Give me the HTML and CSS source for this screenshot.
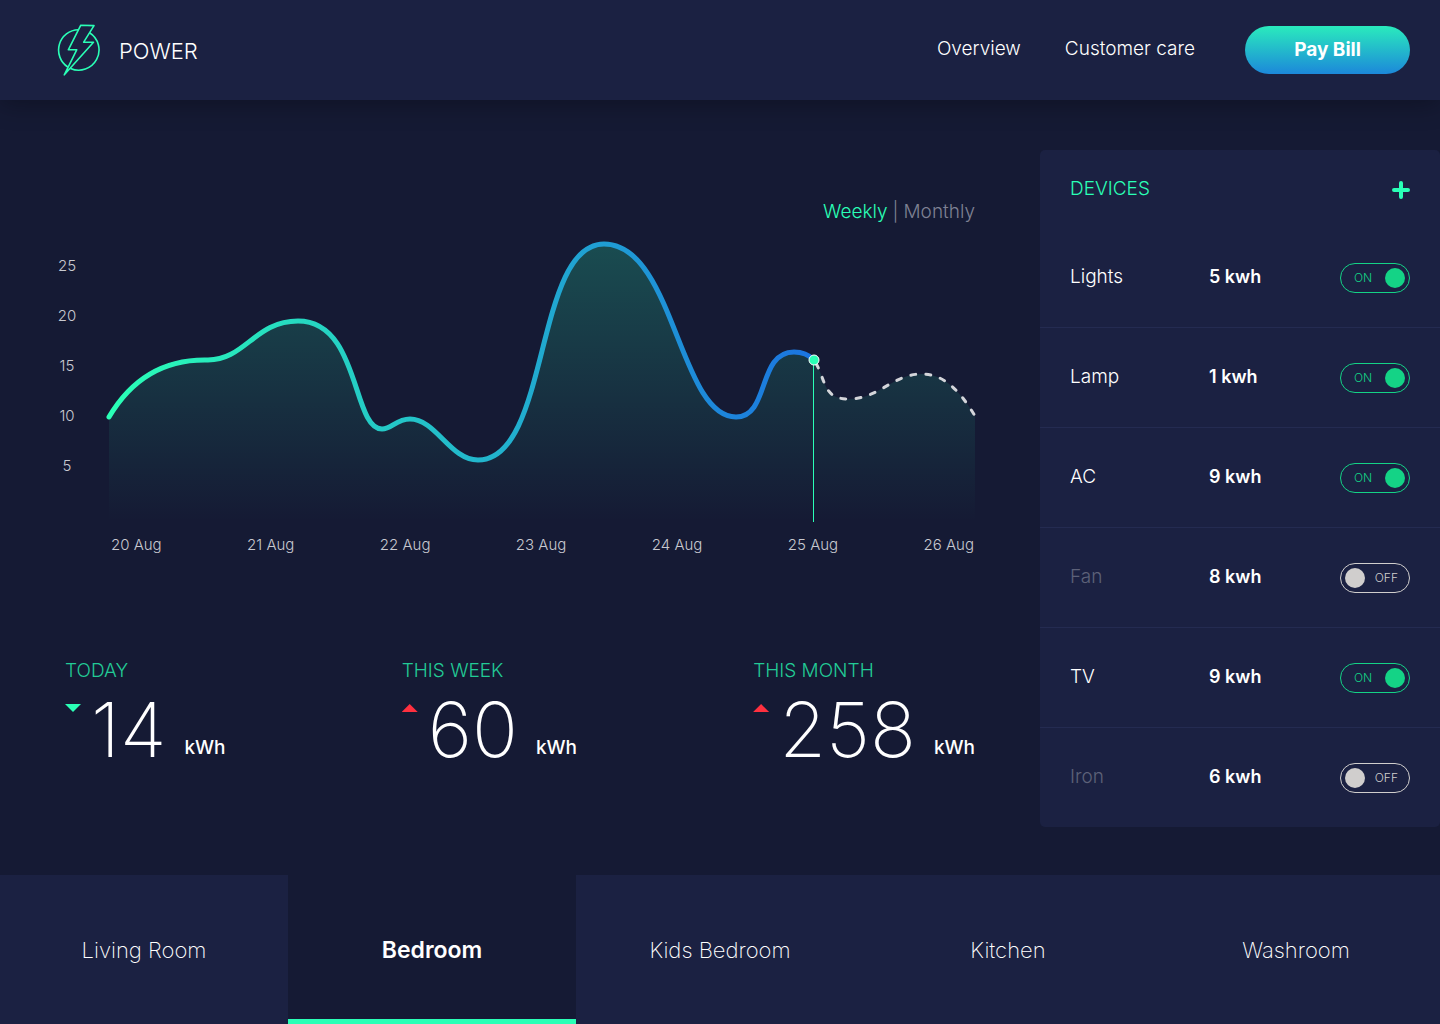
FILE: index.html
```html
<!DOCTYPE html>
<html lang="en">
<head>
<meta charset="utf-8">
<meta name="viewport" content="width=device-width, initial-scale=1">
<title>Power</title>
<link rel="stylesheet" href="styles.css">
</head>
<body>
<header class="topbar">
  <a class="brand" href="#">
    <svg class="brand-icon" width="44" height="54" viewBox="57 23 44 54" fill="none" stroke="#2affb6" stroke-width="1.6" stroke-linejoin="round" aria-hidden="true">
      <path d="M78.400 29.700A20.300 20.300 0 0 0 67.800 67M70.500 68.400A20.300 20.300 0 0 0 89.600 32.700"/>
      <path d="M80.800 25.200L94 25.600L83.700 42.200H93.500L64.300 74.800L76.700 49.800H68.300Z"/>
    </svg>
    <span>POWER</span>
  </a>
  <nav class="topnav">
    <a href="#">Overview</a>
    <a href="#">Customer care</a>
  </nav>
  <button class="pay" type="button">Pay Bill</button>
</header>

<main class="content">
  <section class="usage">
    <div class="range">
      <button class="range-option is-active" type="button">Weekly</button>
      <span>|</span>
      <button class="range-option" type="button">Monthly</button>
    </div>
    <div class="chart">
      <div class="y-axis"><span>25</span><span>20</span><span>15</span><span>10</span><span>5</span></div>
      <svg class="plot" viewBox="104 236 876 288" role="img" aria-label="Energy use from 20 to 26 August">
        <defs>
          <linearGradient id="line" gradientUnits="userSpaceOnUse" x1="109" y1="0" x2="814" y2="0">
            <stop offset="0" stop-color="#2affb6"/><stop offset="1" stop-color="#1b74e0"/>
          </linearGradient>
          <linearGradient id="area" gradientUnits="userSpaceOnUse" x1="0" y1="243" x2="0" y2="522">
            <stop offset="0" stop-color="#2affb6" stop-opacity=".22"/><stop offset="1" stop-color="#2affb6" stop-opacity="0"/>
          </linearGradient>
        </defs>
        <path fill="url(#area)" d="M109 417C135 373 170 359 208 360C245 360 255 321 298 321C360 321 352 429 382 429C392 429 396 419 410 419C436 419 450 460 478 460C550 460 534 244 604 244C674 244 679 417 736 417C770 417 757 352 794 352C802 352 809 355 814 360C826 378 822 399 848 399C880 399 892 374 922 374C944 374 960 391 975 416V522H109Z"/>
        <path fill="none" stroke="#d4d5da" stroke-width="3" stroke-linecap="round" stroke-dasharray="5 10" stroke-dashoffset="-4" d="M814 360C826 378 822 399 848 399C880 399 892 374 922 374C944 374 960 391 975 416"/>
        <path fill="none" stroke="url(#line)" stroke-width="5" stroke-linecap="round" d="M109 417C135 373 170 359 208 360C245 360 255 321 298 321C360 321 352 429 382 429C392 429 396 419 410 419C436 419 450 460 478 460C550 460 534 244 604 244C674 244 679 417 736 417C770 417 757 352 794 352C802 352 809 355 814 360"/>
        <path stroke="#2affb6" d="M813.500 360V522"/>
        <circle cx="814" cy="360" r="5" fill="#2affb6" stroke="#fff"/>
      </svg>
      <div class="x-axis"><span>20 Aug</span><span>21 Aug</span><span>22 Aug</span><span>23 Aug</span><span>24 Aug</span><span>25 Aug</span><span>26 Aug</span></div>
    </div>
    <div class="totals">
      <article class="total">
        <h2>TODAY</h2>
        <p class="reading"><i class="trend trend-down"></i><strong>14</strong><span>kWh</span></p>
      </article>
      <article class="total">
        <h2>THIS WEEK</h2>
        <p class="reading"><i class="trend trend-up"></i><strong>60</strong><span>kWh</span></p>
      </article>
      <article class="total">
        <h2>THIS MONTH</h2>
        <p class="reading"><i class="trend trend-up"></i><strong>258</strong><span>kWh</span></p>
      </article>
    </div>
  </section>

  <aside class="devices">
    <div class="devices-head">
      <h2>DEVICES</h2>
      <button class="add" type="button" aria-label="Add device">
        <svg width="18" height="18" viewBox="0 0 18 18" stroke="#2affb6" stroke-width="4" stroke-linecap="round"><path d="M9 2V16M2 9H16"/></svg>
      </button>
    </div>
    <table class="device-table">
      <tbody>
        <tr><th scope="row">Lights</th><td>5 kwh</td><td><label class="switch"><input type="checkbox" aria-label="Lights" checked><span>ON</span></label></td></tr>
        <tr><th scope="row">Lamp</th><td>1 kwh</td><td><label class="switch"><input type="checkbox" aria-label="Lamp" checked><span>ON</span></label></td></tr>
        <tr><th scope="row">AC</th><td>9 kwh</td><td><label class="switch"><input type="checkbox" aria-label="AC" checked><span>ON</span></label></td></tr>
        <tr class="is-off"><th scope="row">Fan</th><td>8 kwh</td><td><label class="switch"><input type="checkbox" aria-label="Fan"><span>OFF</span></label></td></tr>
        <tr><th scope="row">TV</th><td>9 kwh</td><td><label class="switch"><input type="checkbox" aria-label="TV" checked><span>ON</span></label></td></tr>
        <tr class="is-off"><th scope="row">Iron</th><td>6 kwh</td><td><label class="switch"><input type="checkbox" aria-label="Iron"><span>OFF</span></label></td></tr>
      </tbody>
    </table>
  </aside>
</main>

<nav class="rooms">
  <a href="#">Living Room</a>
  <a class="is-current" href="#" aria-current="page">Bedroom</a>
  <a href="#">Kids Bedroom</a>
  <a href="#">Kitchen</a>
  <a href="#">Washroom</a>
</nav>
</body>
</html>
```
FILE: styles.css
```css
:root {
  --bg: #151a34;
  --panel: #1b2142;
  --accent: #2affb6;
  --accent-soft: #22cb96;
  --on: #14d386;
  --off: #d0cecd;
}

* { box-sizing: border-box; }

body {
  margin: 0;
  min-height: 100vh;
  display: flex;
  flex-direction: column;
  background: var(--bg);
  color: #fff;
  font: 300 19px/24px Inter, "Liberation Sans", sans-serif;
}

h2, p { margin: 0; }
h2 { font-size: 19px; font-weight: 300; }
a { color: inherit; text-decoration: none; }
button { border: 0; padding: 0; background: none; color: inherit; font: inherit; cursor: pointer; }

.topbar {
  display: flex;
  align-items: center;
  height: 100px;
  padding: 0 30px 0 57px;
  background: var(--panel);
  box-shadow: 0 4px 24px rgba(0, 0, 0, .3);
}
.brand { display: flex; align-items: center; gap: 18px; font-size: 22px; }
.brand span { padding-top: 2px; }
.topnav { display: flex; gap: 44px; margin-left: auto; padding-bottom: 2px; }
.pay {
  width: 165px;
  height: 48px;
  margin-left: 50px;
  border-radius: 24px;
  background: linear-gradient(#2aebbd, #1c88da);
  font-weight: 700;
}

.content { display: flex; flex: 1; align-items: flex-start; padding-top: 50px; }

.usage { flex: 1; min-width: 0; padding: 50px 60px 40px 55px; }
.range { display: flex; justify-content: flex-end; gap: 5px; padding-right: 5px; color: #7e8193; }
.range-option.is-active { color: var(--accent); }

.chart {
  display: grid;
  grid-template-columns: 24px 1fr;
  column-gap: 25px;
  margin-top: 12px;
}
.y-axis {
  display: flex;
  flex-direction: column;
  justify-content: space-between;
  padding: 18px 0 46px;
  text-align: center;
}
.y-axis, .x-axis { color: #c8c9d0; font-size: 15px; }
.plot { display: block; width: 100%; height: auto; }
.x-axis { grid-column: 2; display: flex; justify-content: space-between; padding: 9px 6px 0 7px; }

.totals { display: flex; justify-content: space-between; margin-top: 102px; padding: 0 5px 0 10px; }
.total h2 { color: var(--accent-soft); }
.reading { display: flex; align-items: flex-end; }
.reading strong { margin: 0 18px 0 10px; font-size: 76px; font-weight: 200; line-height: 92px; }
.reading span { padding-bottom: 15px; font-weight: 500; }
.trend { align-self: flex-start; width: 16px; height: 8px; margin-top: 21px; }
.trend-up { background: #ff303f; clip-path: polygon(50% 0, 100% 100%, 0 100%); }
.trend-down { background: var(--accent); clip-path: polygon(0 0, 100% 0, 50% 100%); }

.devices { width: 400px; background: var(--panel); border-radius: 5px; }
.devices-head { display: flex; justify-content: space-between; align-items: center; padding: 27px 30px 26px; color: var(--accent); }
.add { display: flex; padding-top: 2px; }
.device-table { width: 100%; border-collapse: collapse; }
.device-table tr + tr { border-top: 1px solid #242b51; }
.device-table th, .device-table td { height: 100px; padding: 0; text-align: left; }
.device-table th { width: 169px; padding-left: 30px; font-weight: 300; }
.device-table td { font-size: 18px; font-weight: 600; }
.device-table td:last-child { padding: 2px 30px 0 0; }
.is-off th { color: #5d6179; }

.switch {
  display: flex;
  flex-direction: row-reverse;
  align-items: center;
  justify-content: space-between;
  width: 70px;
  height: 30px;
  margin-left: auto;
  padding: 0 4px 0 13px;
  border: 1px solid var(--on);
  border-radius: 15px;
  color: var(--on);
  font-size: 12px;
  font-weight: 300;
  cursor: pointer;
}
.switch input { appearance: none; width: 20px; height: 20px; margin: 0; border-radius: 50%; background: var(--on); }
.is-off .switch { flex-direction: row; padding: 0 11px 0 4px; border-color: var(--off); color: var(--off); }
.is-off .switch input { background: var(--off); }

.rooms { display: flex; background: var(--panel); }
.rooms a {
  flex: 1;
  height: 149px;
  display: flex;
  align-items: center;
  justify-content: center;
  border-bottom: 5px solid transparent;
  padding-top: 5px;
  font-size: 22px;
  font-weight: 200;
}
.rooms .is-current { background: var(--bg); border-bottom-color: var(--accent); font-size: 23px; font-weight: 600; }
```
